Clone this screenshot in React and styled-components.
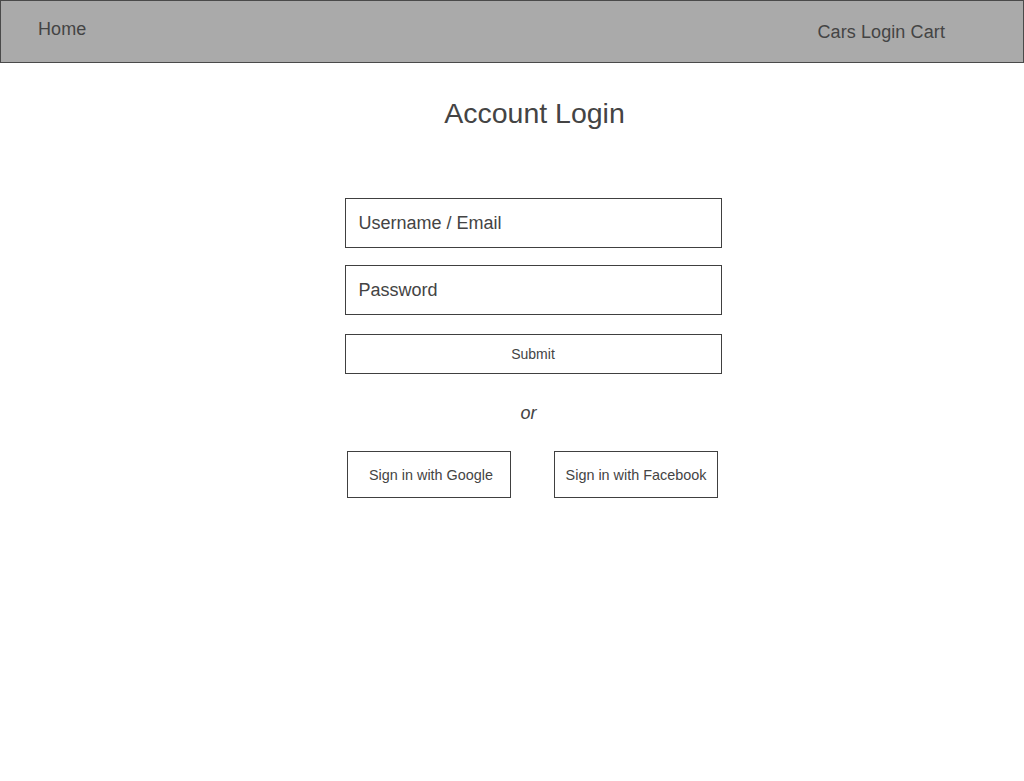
import React from "react";
import styled, { createGlobalStyle } from "styled-components";

const GlobalStyle = createGlobalStyle`
  body {
    margin: 0;
    background: #ffffff;
    font-family: "Liberation Sans", Arial, sans-serif;
    color: #404040;
  }
`;

// top navigation bar
const HeaderBar = styled.header`
  display: flex;
  justify-content: space-between;
  align-items: flex-start;
  height: 63px;
  box-sizing: border-box;
  background-color: #aaaaaa;
  border: 1px solid #4a4a4a;
  padding: 0 78px 0 37px;
`;

const NavText = styled.a`
  display: block;
  font-size: 18px;
  line-height: 21px;
  letter-spacing: 0.1px;
  color: #444444;
  text-decoration: none;
  margin-top: ${({ $top }) => $top}px;
  cursor: pointer;
`;

const Main = styled.main`
  display: flex;
  flex-direction: column;
  align-items: center;
  padding-left: 42px;
`;

const Title = styled.h1`
  margin: 34px 0 0 3px;
  font-size: 28.5px;
  line-height: 32px;
  font-weight: normal;
  color: #444444;
`;

const Form = styled.form`
  display: flex;
  flex-direction: column;
  width: 377px;
  margin-top: 69px;
`;

const Field = styled.input`
  height: 50px;
  box-sizing: border-box;
  border: 1px solid #404040;
  padding: 0 13px;
  margin-top: ${({ $gap }) => $gap || 0}px;
  font-family: "Liberation Sans", Arial, sans-serif;
  font-size: 18px;
  color: #444444;
  outline: none;
  background: #fff;
  border-radius: 0;

  &::placeholder {
    color: #444444;
    opacity: 1;
  }
`;

const SubmitButton = styled.button`
  height: 40px;
  margin-top: 19px;
  border: 1px solid #404040;
  background: #fff;
  border-radius: 0;
  font-family: "Liberation Sans", Arial, sans-serif;
  font-size: 14px;
  color: #444444;
  cursor: pointer;
`;

const OrText = styled.div`
  margin-top: 29px;
  text-align: center;
  margin-right: 9px;
  font-size: 18px;
  line-height: 20px;
  font-style: italic;
  color: #444444;
`;

const SocialRow = styled.div`
  display: flex;
  justify-content: center;
  gap: 43px;
  margin-top: 28px;
  padding-right: 1px;
`;

const SocialButton = styled.button`
  width: 164px;
  height: 47px;
  border: 1px solid #404040;
  background: #fff;
  border-radius: 0;
  font-family: "Liberation Sans", Arial, sans-serif;
  font-size: 14.4px;
  color: #444444;
  padding: 0 0 0 ${({ $shift }) => $shift || 0}px;
  cursor: pointer;
`;

export default function App() {
  return (
    <>
      <GlobalStyle />
      <HeaderBar>
        <NavText $top={18}>Home</NavText>
        <NavText $top={21}>Cars Login Cart</NavText>
      </HeaderBar>
      <Main>
        <Title>Account Login</Title>
        <Form onSubmit={(e) => e.preventDefault()}>
          <Field type="text" placeholder="Username / Email" />
          <Field type="password" placeholder="Password" $gap={17} />
          <SubmitButton type="submit">Submit</SubmitButton>
          <OrText>or</OrText>
          <SocialRow>
            <SocialButton type="button" $shift={4}>Sign in with Google</SocialButton>
            <SocialButton type="button">Sign in with Facebook</SocialButton>
          </SocialRow>
        </Form>
      </Main>
    </>
  );
}
